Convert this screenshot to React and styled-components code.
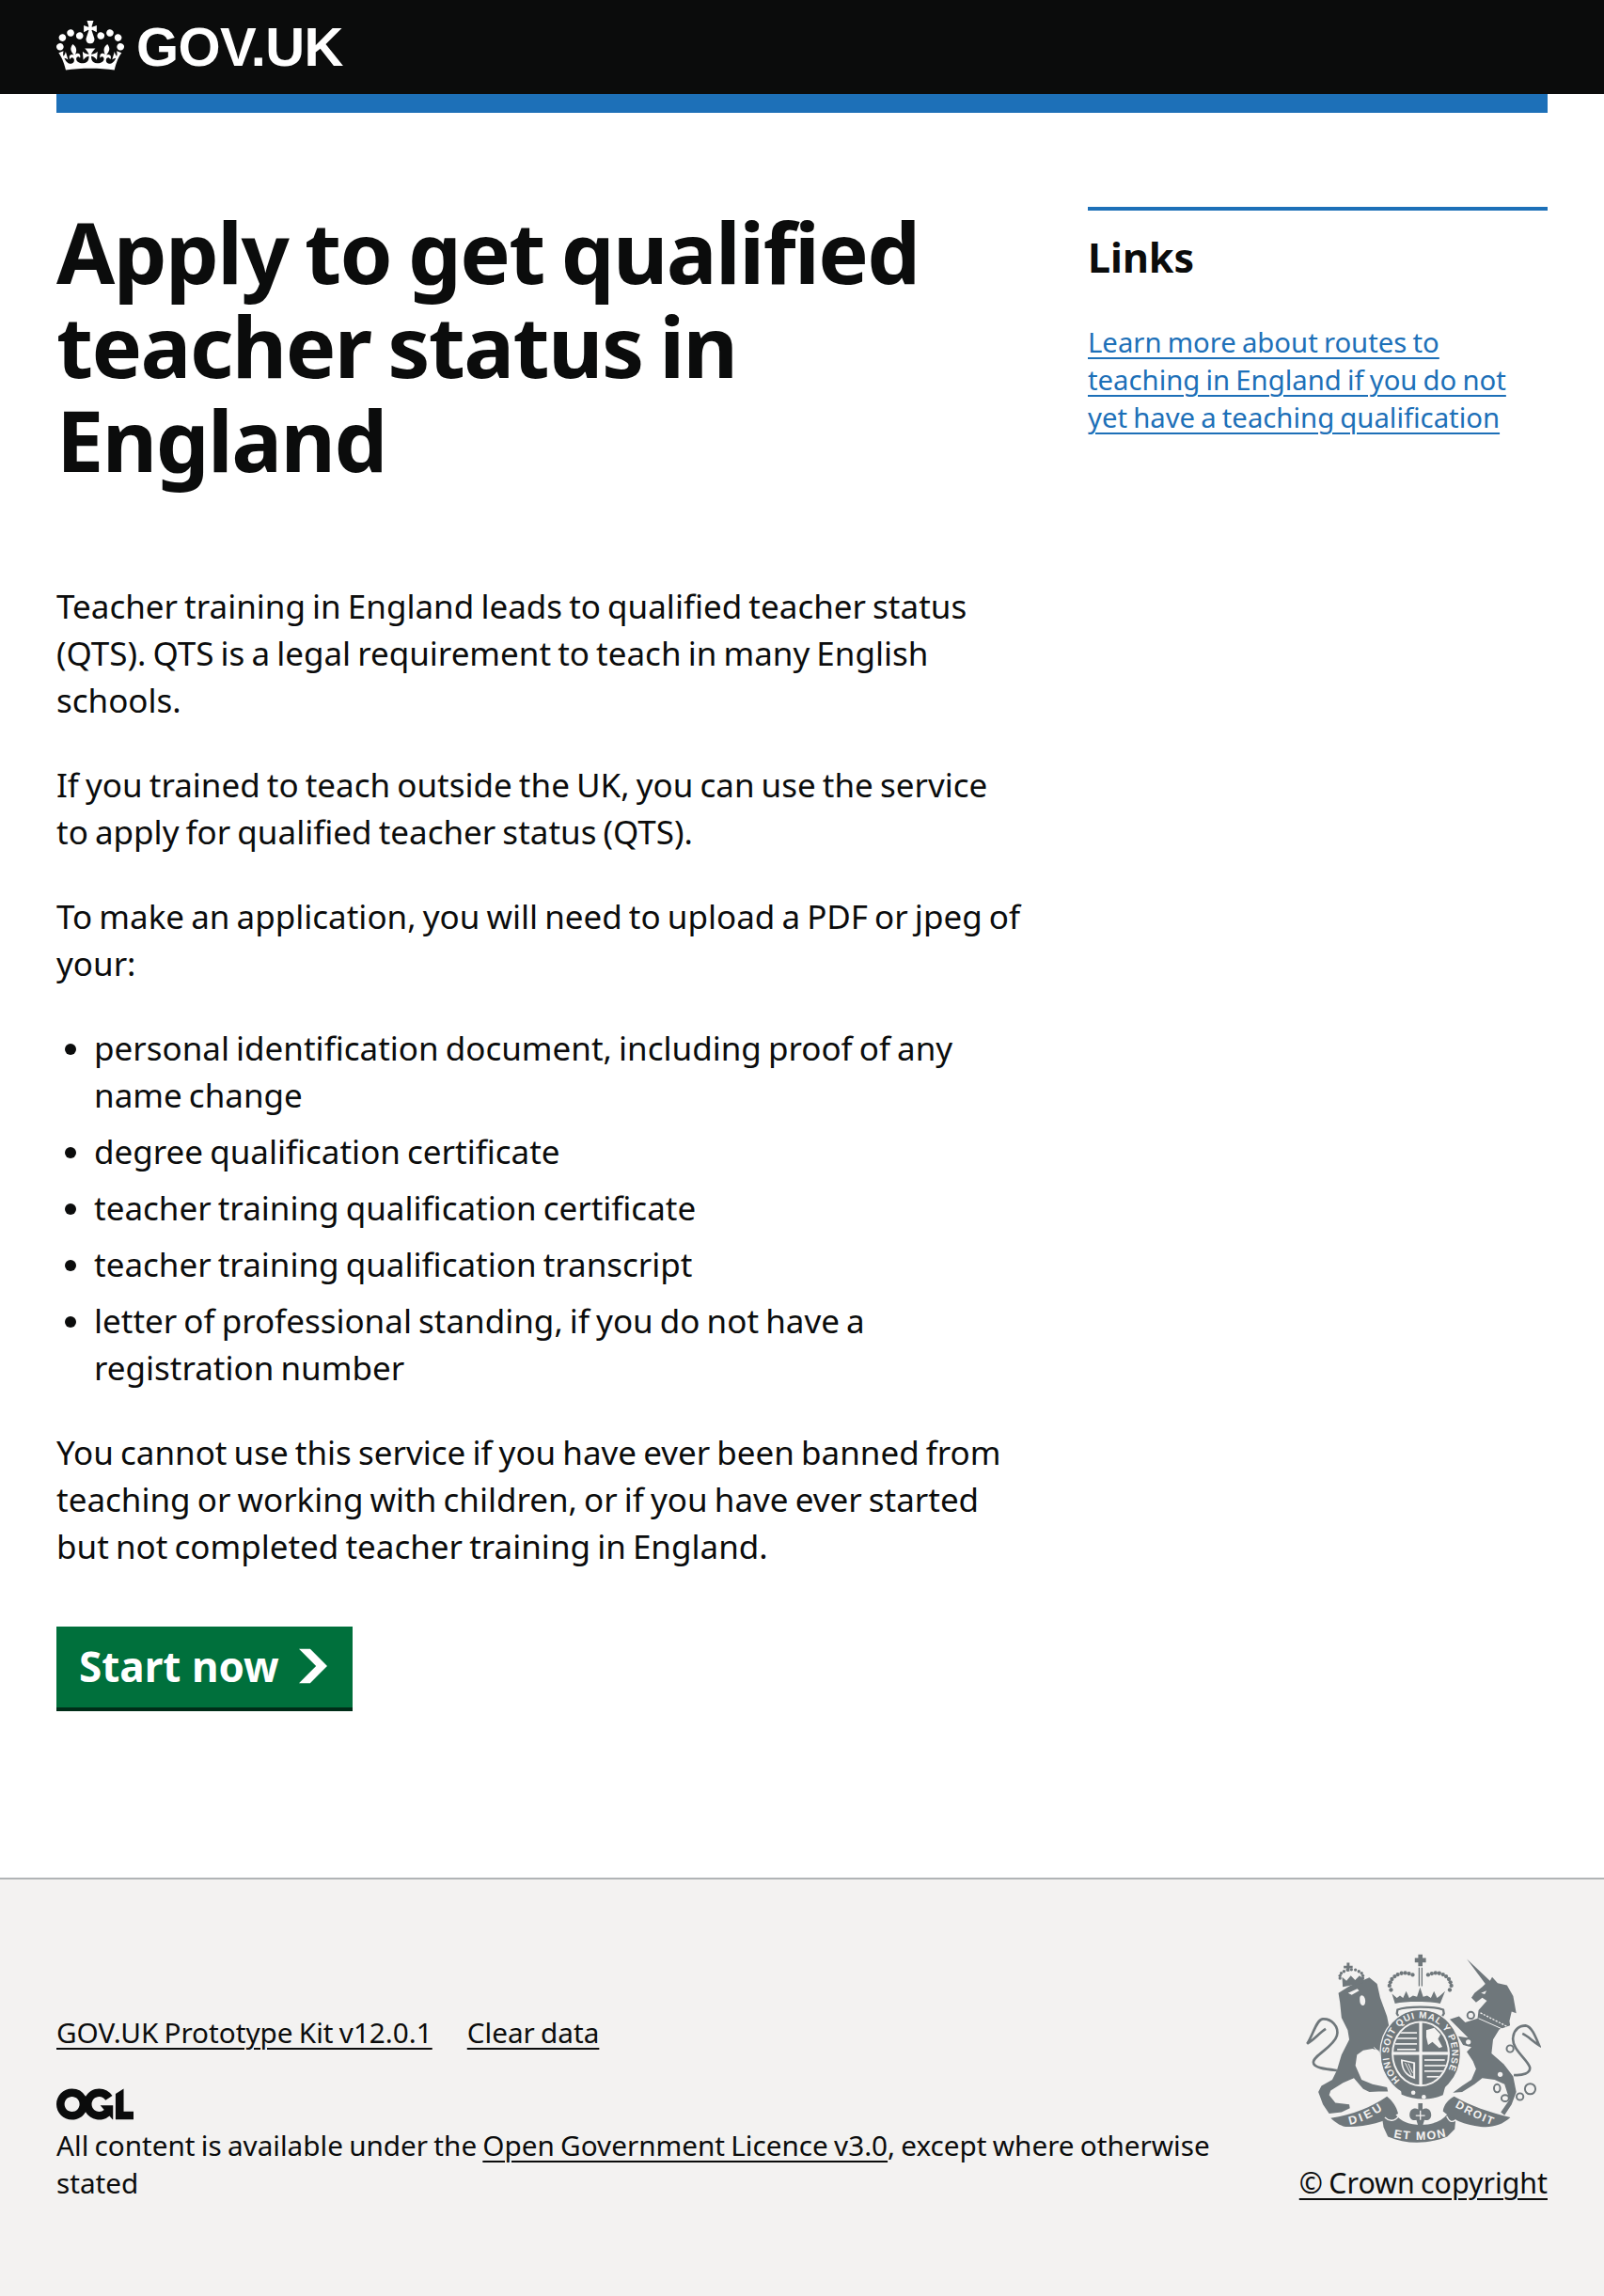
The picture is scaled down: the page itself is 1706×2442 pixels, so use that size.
import React from 'react';

import styled, { createGlobalStyle } from 'styled-components';

const BLACK = '#0b0c0c';
const BLUE = '#1d70b8';
const CREST = '#6f777b';
const FOOTER_BG = '#f3f2f1';
const FONT = '"Noto Sans", "Open Sans", sans-serif';

const GlobalStyle = createGlobalStyle`
  html, body {
    margin: 0;
    padding: 0;
    background: #fff;
    color: ${BLACK};
    font-family: ${FONT};
  }
  * { box-sizing: border-box; }
`;

const CROWN_PATH =
  'M25 30.2c3.5 1.5 7.7-.2 9.1-3.7 1.5-3.6-.2-7.8-3.9-9.2-3.6-1.4-7.6.3-9.1 3.9-1.4 3.5.3 7.5 3.9 9zM9 39.5c3.6 1.5 7.8-.2 9.2-3.7 1.5-3.6-.2-7.8-3.9-9.1-3.6-1.5-7.6.2-9.1 3.8-1.4 3.5.3 7.5 3.8 9zM4.4 57.2c3.5 1.5 7.7-.2 9.1-3.8 1.5-3.6-.2-7.7-3.9-9.1-3.5-1.5-7.6.3-9.1 3.8-1.4 3.5.3 7.6 3.9 9.1zm38.3-21.4c3.5 1.5 7.7-.2 9.1-3.8 1.5-3.6-.2-7.7-3.9-9.1-3.6-1.5-7.6.3-9.1 3.8-1.3 3.6.4 7.7 3.9 9.1zm64.4-5.6c-3.6 1.5-7.8-.2-9.1-3.7-1.5-3.6.2-7.8 3.8-9.2 3.6-1.4 7.7.3 9.2 3.9 1.3 3.5-.4 7.5-3.9 9zm15.9 9.3c-3.6 1.5-7.7-.2-9.1-3.7-1.5-3.6.2-7.8 3.7-9.1 3.6-1.5 7.7.2 9.2 3.8 1.5 3.5-.3 7.5-3.8 9zm4.7 17.7c-3.6 1.5-7.8-.2-9.2-3.8-1.5-3.6.2-7.7 3.9-9.1 3.6-1.5 7.7.3 9.2 3.8 1.3 3.5-.4 7.6-3.9 9.1zM89.3 35.8c-3.6 1.5-7.8-.2-9.2-3.8-1.4-3.6.2-7.7 3.9-9.1 3.6-1.5 7.7.3 9.2 3.8 1.4 3.6-.3 7.7-3.9 9.1zM69.7 17.7l8.9 4.7V9.3l-8.9 2.8c-.2-.3-.5-.6-.9-.9L72.4 0H59.6l3.5 11.2c-.3.3-.6.5-.9.9l-8.8-2.8v13.1l8.8-4.7c.3.3.6.7.9.9l-5 15.4v.1c-.2.8-.4 1.6-.4 2.4 0 4.1 3.1 7.5 7 8.1h.2c.3 0 .7.1 1 .1.4 0 .7 0 1-.1h.2c4-.6 7.1-4.1 7.1-8.1 0-.8-.1-1.7-.4-2.4V34l-5.1-15.4c.4-.2.7-.6 1-.9zM66 92.8c16.9 0 32.8 1.1 47.1 3.2 4-16.9 8.9-26.7 14-33.5l-9.6-3.4c1 4.9 1.1 7.2 0 10.2-1.5-1.4-3-4.3-4.2-8.7L108.6 76c2.8-2 5-3.2 7.5-3.3-4.4 9.4-10 11.9-13.6 11.2-4.3-.8-6.3-4.6-5.6-7.9 1-4.7 5.7-5.9 8-.5 4.3-8.7-3-11.4-7.6-8.8 7.1-7.2 7.9-13.5 2.1-21.1-8 6.1-8.1 12.3-4.5 20.8-4.7-5.4-12.1-2.5-9.5 6.2 3.4-5.2 7.9-2 7.2 3.1-.6 4.3-6.4 7.8-13.5 7.2-10.3-.9-10.9-8-11.2-13.8 2.5-.5 7.1 1.8 11 7.3L80.2 60c-4.1 4.4-8 5.3-12.3 5.4 1.4-4.4 8-11.6 8-11.6H55.5s6.4 7.2 7.9 11.6c-4.2-.1-8-1-12.3-5.4l1.4 16.4c3.9-5.5 8.5-7.7 10.9-7.3-.3 5.8-.9 12.8-11.1 13.8-7.2.6-12.9-2.9-13.5-7.2-.7-5 3.8-8.3 7.1-3.1 2.7-8.7-4.6-11.6-9.4-6.2 3.7-8.5 3.6-14.7-4.6-20.8-5.8 7.6-5 13.9 2.2 21.1-4.7-2.6-11.9.1-7.7 8.8 2.3-5.5 7.1-4.2 8.1.5.7 3.3-1.3 7.1-5.7 7.9-3.5.7-9-1.8-13.5-11.2 2.5.1 4.7 1.3 7.5 3.3l-4.7-15.4c-1.2 4.4-2.7 7.2-4.3 8.7-1.1-3-.9-5.3 0-10.2l-9.5 3.4c5 6.9 9.9 16.7 14 33.5 14.8-2.1 30.8-3.2 47.7-3.2z';

const OGL_PATH =
  'M421.5 142.8V.1l-50.7 32.3v161.1h112.4v-50.7zm-122.3-9.6A47.12 47.12 0 0 1 221 97.8c0-26 21.1-47.1 47.1-47.1 16.7 0 31.4 8.7 39.7 21.8l42.7-27.2A97.63 97.63 0 0 0 268.1 0c-36.5 0-68.3 20.1-85.1 49.7A98 98 0 0 0 97.8 0C43.9 0 0 43.9 0 97.8s43.9 97.8 97.8 97.8c36.5 0 68.3-20.1 85.1-49.7a97.76 97.76 0 0 0 149.6 25.4l19.4 22.2h3v-87.8h-80l24.3 27.5zM97.8 145c-26 0-47.1-21.1-47.1-47.1s21.1-47.1 47.1-47.1 47.2 21 47.2 47S123.8 145 97.8 145';

const LION_BODY =
  'M115 150l35-22 65-28 25 20 10 45 22 60 8 40-8 35 13 75-10 10-20-20-10-30-20-5-30 5-20 15-5 35 20 45 35 15 47 10 3 13-30 0-30 2-20-10-30-35-35 15-40 25-5 15 20 25 45 5 2 12-27 13-40 5-20-30-15-40 10-20 35-20 15-30 15-50 25-50-5-30-20-40-5-50z';

const UNICORN_BODY =
  'M140 40l75 70 7-12 18 20 30 7 20 35 10 55-15-5-7 30 2 15-35 13-20 32-5 45 40 35 30 40 10 50-15 40-23 35-12-10 28-40-16-50-32-15-40-5-25 20-40 25-30 2 30-22 30-20 15-35-10-25-20-30 15-15-27-7-16-28 33 5-60-60 30-10 20 20 40-13 3-27 27-30-15-10-20 15-15-15 10-15 25-20 10-10z';

const arc = (cx, cy, rx, ry, from, to, n) =>
  Array.from({ length: n }, (_, i) => {
    const a = ((from + ((to - from) * i) / (n - 1)) * Math.PI) / 180;
    return [Math.round(cx + rx * Math.cos(a)), Math.round(cy + ry * Math.sin(a))];
  });

const PEARLS = [
  ...arc(405, 190, 50, 45, 185, 300, 9),
  ...arc(505, 190, 50, 45, 240, 355, 9),
  [360, 200], [550, 200],
];

const LION_CROWN_DOTS = arc(232, 158, 38, 24, 170, 370, 11);

const LIONS = [
  [378, 336, 66], [372, 354, 72], [374, 372, 70], [380, 390, 60],
  [468, 424, 66], [468, 442, 70], [468, 460, 64], [476, 478, 46],
];

const Crest = () => (
  <CrestSvg viewBox="85 80 760 620">
    <defs>
      <clipPath id="shieldClip">
        <ellipse cx="456" cy="406" rx="88" ry="100" />
      </clipPath>
    </defs>
    <g fill={CREST}>
      {/* royal crown */}
      <path d="M448 85h14v12h11v14h-11v12h-14v-12h-11V97h11z" />
      <path d="M449 128h4v60h-4zM458 128h4v60h-4z" />
      {PEARLS.map(([cx, cy]) => (
        <circle key={`${cx}-${cy}`} cx={cx} cy={cy} r="6.5" />
      ))}
      <path d="M363 212l16 14 10-8 10 8 10-22 10 22 12-8 13 4 10-30 10 30 13-4 12 8 10-22 10 22 10-8 16-14-16 40c-40-8-110-8-146 0z" />
      <path d="M381 264c30-12 118-12 148 0l2 12c-2 4-4 8-8 12-30-10-106-10-136 0-4-4-6-8-8-12z" fill="none" stroke={CREST} strokeWidth="7" />

      {/* lion */}
      <g transform="translate(75 60)">
        <path d={LION_BODY} />
        <path d="M110 400c-36-4-76-8-76-26 0-22 66-50 76-86 8-30-18-56-46-54-20 2-30 48-50 80 24-14 38-34 60-48" fill="none" stroke={CREST} strokeWidth="8" />
        <path d="M146 150l30-14 6 6-24 14zM188 158c8-2 14 8 14 18s-4 16-10 14-8-10-8-18 0-12 4-14z" fill={FOOTER_BG} />
        <path d="M230 325l52 55" fill="none" stroke={FOOTER_BG} strokeWidth="3" />
      </g>

      {/* lion crown */}
      <path d="M217 112h9v10h10v8h-10v10h-9v-10h-10v-8h10z" />
      {LION_CROWN_DOTS.map(([cx, cy]) => (
        <circle key={`${cx}-${cy}`} cx={cx} cy={cy} r="5" />
      ))}
      <path d="M202 158l14 12 14-16 14 14 14-14 14 10-2 14-66 12z" />

      {/* unicorn */}
      <g transform="translate(465 60)">
        <path d={UNICORN_BODY} />
        <path d="M292 415c30 2 54-6 52-24-4-24-62-60-54-100 4-26 22-36 40-36 18 2 30 30 44 64-20-12-36-30-54-38" fill="none" stroke={CREST} strokeWidth="8" />
        <path d="M186 150l18-8-6 12z" fill={FOOTER_BG} />
        <path d="M180 200c-6 10-14 14-22 14l12-8z" fill={FOOTER_BG} />
        <path d="M184 214l90 46" fill="none" stroke={FOOTER_BG} strokeWidth="4" strokeDasharray="7 4" />
        <path d="M178 232l90 40" fill="none" stroke={FOOTER_BG} strokeWidth="3" />
        <circle cx="270" cy="378" r="8" fill={FOOTER_BG} />
        <circle cx="248" cy="413" r="8" fill={FOOTER_BG} />
        <circle cx="280" cy="330" r="11" fill={FOOTER_BG} />
        <circle cx="153" cy="222" r="11" fill={FOOTER_BG} />
        <circle cx="145" cy="308" r="11" fill={FOOTER_BG} />
        <g fill="none" stroke={CREST} strokeWidth="6">
          <circle cx="280" cy="330" r="11" />
          <circle cx="153" cy="222" r="11" />
          <circle cx="145" cy="308" r="11" />
          <ellipse cx="238" cy="458" rx="10" ry="13" />
          <ellipse cx="264" cy="490" rx="12" ry="10" />
          <circle cx="312" cy="485" r="11" />
          <circle cx="345" cy="460" r="17" />
        </g>
      </g>

      {/* garter and shield */}
      <ellipse cx="455" cy="405" rx="130" ry="142" stroke={FOOTER_BG} strokeWidth="4" />
      <ellipse cx="456" cy="406" rx="94" ry="106" fill={FOOTER_BG} />
      <path id="garter" d="M389 492A102 114 0 1 1 521 492" fill="none" />
      <text fontFamily='"Liberation Sans", sans-serif' fontSize="30" fontWeight="700" fill={FOOTER_BG}>
        <textPath href="#garter" textLength="490" lengthAdjust="spacing">HONI SOIT QUI MAL Y PENSE</textPath>
      </text>
      <g clipPath="url(#shieldClip)">
        <rect x="360" y="300" width="91" height="100" />
        <rect x="461" y="300" width="91" height="100" />
        <rect x="360" y="410" width="91" height="100" />
        <rect x="461" y="410" width="91" height="100" />
        {LIONS.map(([x, y, w]) => (
          <rect key={`${x}-${y}`} x={x} y={y} width={w} height="5" fill={FOOTER_BG} />
        ))}
        <path d="M474 330l26-8 20 22-8 14 14 26-10 4-22-20-14 10-6-26z" fill={FOOTER_BG} />
      </g>
      <path d="M392 424l46 10v54c-30-8-46-30-46-64z" fill={FOOTER_BG} />
      <path d="M398 430l34 8v42c-22-8-34-24-34-50z" />
      <path d="M406 436l20 40M416 438l14 30" stroke={FOOTER_BG} strokeWidth="3" fill="none" />

      {/* collar under the shield */}
      <path d="M390 502c40 34 100 34 146 8l-8 30c-40 18-94 16-134-2z" />
      <circle cx="432" cy="532" r="7" fill={FOOTER_BG} />
      <circle cx="466" cy="546" r="7" fill={FOOTER_BG} />

      {/* fleur */}
      <path d="M448 566h14v20c12-8 28 0 28 18 0 12-10 20-22 16l-6 20h-14l-6-20c-12 4-22-4-22-16 0-18 16-26 28-18z" />
      <path d="M455 590v30M440 606h30" stroke={FOOTER_BG} strokeWidth="4" fill="none" />

      {/* motto ribbons */}
      <path d="M165 614c72-12 130-34 182-70 16 12 32 34 36 56-46 28-104 44-170 42-20-4-32-14-48-28z" />
      <path d="M330 606l44-4c18 24 46 34 82 34s66-10 86-34l28 6-4 42-24 24c-66 26-132 26-192 0l-14-30z" />
      <path d="M528 592c2-20 18-40 36-48 52 30 116 52 182 68-28 26-62 34-96 30-52-6-94-24-122-50z" />
      <path d="M340 612c14 14 32 14 46-6M570 620c-14 10-22 6-30-12" fill="none" stroke={FOOTER_BG} strokeWidth="4" />
      <path id="ribbonLeft" d="M226 636c38-8 72-24 106-48" fill="none" />
      <text fontFamily='"Liberation Sans", sans-serif' fontSize="38" fontWeight="700" fill={FOOTER_BG}>
        <textPath href="#ribbonLeft" textLength="118" lengthAdjust="spacing">DIEU</textPath>
      </text>
      <path id="ribbonMid" d="M368 676c56 12 120 12 176-4" fill="none" />
      <text fontFamily='"Liberation Sans", sans-serif' fontSize="38" fontWeight="700" fill={FOOTER_BG}>
        <textPath href="#ribbonMid" textLength="172" lengthAdjust="spacing">ET MON</textPath>
      </text>
      <path id="ribbonRight" d="M566 578c38 22 76 42 120 58" fill="none" />
      <text fontFamily='"Liberation Sans", sans-serif' fontSize="36" fontWeight="700" fill={FOOTER_BG}>
        <textPath href="#ribbonRight" textLength="134" lengthAdjust="spacing">DROIT</textPath>
      </text>
    </g>
  </CrestSvg>
);

const App = () => (
  <>
    <GlobalStyle />
    <Header>
      <HeaderLogo href="#">
        <CrownSvg viewBox="0 0 132 97">
          <path fill="currentColor" fillRule="evenodd" d={CROWN_PATH} />
        </CrownSvg>
        <Logotype>GOV.UK</Logotype>
      </HeaderLogo>
    </Header>
    <Container>
      <BlueBar />
      <Main>
        <TwoThirds>
          <Title>Apply to get qualified teacher status in England</Title>
          <Body>
            Teacher training in England leads to qualified teacher status (QTS). QTS is a legal
            requirement to teach in many English schools.
          </Body>
          <Body>
            If you trained to teach outside the UK, you can use the service to apply for qualified
            teacher status (QTS).
          </Body>
          <Body>To make an application, you will need to upload a PDF or jpeg of your:</Body>
          <BulletList>
            <li>personal identification document, including proof of any name change</li>
            <li>degree qualification certificate</li>
            <li>teacher training qualification certificate</li>
            <li>teacher training qualification transcript</li>
            <li>letter of professional standing, if you do not have a registration number</li>
          </BulletList>
          <Body>
            You cannot use this service if you have ever been banned from teaching or working with
            children, or if you have ever started but not completed teacher training in England.
          </Body>
          <StartButton href="#">
            Start now
            <svg viewBox="0 0 33 40" width="30" height="38">
              <path fill="currentColor" d="M0 0h13.1l19.9 19.9L13 40H0l20-20.1z" />
            </svg>
          </StartButton>
        </TwoThirds>
        <Aside>
          <AsideTitle>Links</AsideTitle>
          <AsideLink href="#">
            Learn more about routes to teaching in England if you do not yet have a teaching
            qualification
          </AsideLink>
        </Aside>
      </Main>
    </Container>
    <Footer>
      <FooterInner>
        <FooterMeta>
          <MetaLinks>
            <FooterLink href="#">GOV.UK Prototype Kit v12.0.1</FooterLink>
            <FooterLink href="#">Clear data</FooterLink>
          </MetaLinks>
          <OglSvg viewBox="0 0 483.2 195.7">
            <path fill="currentColor" d={OGL_PATH} />
          </OglSvg>
          <Licence>
            All content is available under the{' '}
            <FooterLink href="#">Open Government Licence v3.0</FooterLink>, except where otherwise
            stated
          </Licence>
        </FooterMeta>
        <CopyrightBlock>
          <Crest />
          <CopyrightLink href="#">© Crown copyright</CopyrightLink>
        </CopyrightBlock>
      </FooterInner>
    </Footer>
  </>
);
export default App;

const Header = styled.header`
  height: 100px;
  padding: 0 60px;
  background: ${BLACK};
  display: flex;
  align-items: center;
`;

const HeaderLogo = styled.a`
  display: flex;
  align-items: center;
  gap: 13px;
  color: #fff;
  text-decoration: none;
`;

const CrownSvg = styled.svg`
  width: 72px;
  height: 53px;
  margin-top: -3px;
`;

const Logotype = styled.span`
  font-family: 'Liberation Sans', Arial, sans-serif;
  font-weight: 700;
  font-size: 58px;
  line-height: 60px;
  letter-spacing: -0.6px;
`;

const Container = styled.div`
  margin: 0 60px;
`;

const BlueBar = styled.div`
  height: 20px;
  background: ${BLUE};
`;

const Main = styled.main`
  display: grid;
  grid-template-columns: 1037px 489px;
  column-gap: 60px;
  padding-top: 100px;
  height: 1877px;
`;

const TwoThirds = styled.div`
  min-width: 0;
`;

const Title = styled.h1`
  margin: -3px 0 103px;
  font-weight: 700;
  font-size: 90px;
  line-height: 100px;
  letter-spacing: -1.6px;
  word-spacing: -4px;
`;

const Body = styled.p`
  margin: 0 0 40px;
  max-width: 1025px;
  font-size: 35px;
  line-height: 50px;
  word-spacing: -2px;
`;

const BulletList = styled.ul`
  margin: 0 0 40px;
  padding-left: 40px;
  font-size: 35px;
  line-height: 50px;
  word-spacing: -2px;

  li {
    margin-bottom: 10px;
  }
  li:last-child {
    margin-bottom: 0;
  }
`;

const StartButton = styled.a`
  display: inline-flex;
  align-items: center;
  gap: 21px;
  height: 90px;
  margin-top: 20px;
  padding: 0 27px 2px 24px;
  background: #00703c;
  color: #fff;
  font-weight: 700;
  font-size: 44px;
  text-decoration: none;
  border-bottom: 4px solid #002d18;
`;

const Aside = styled.aside`
  align-self: start;
  padding-top: 20px;
  border-top: 4px solid ${BLUE};
`;

const AsideTitle = styled.h2`
  margin: 0 0 40px;
  font-weight: 700;
  font-size: 43px;
  line-height: 60px;
`;

const AsideLink = styled.a`
  display: block;
  color: ${BLUE};
  font-size: 29.3px;
  line-height: 40px;
  word-spacing: -1.5px;
  text-decoration-thickness: 2px;
  text-underline-offset: 5px;
`;

const Footer = styled.footer`
  border-top: 2px solid #b1b4b6;
  background: ${FOOTER_BG};
  padding: 78px 60px 102px;
`;

const FooterInner = styled.div`
  display: flex;
  align-items: flex-end;
  justify-content: space-between;
  gap: 60px;
`;

const FooterMeta = styled.div`
  flex: 1;
  min-width: 0;
`;

const MetaLinks = styled.div`
  display: flex;
  gap: 37px;
  margin-bottom: 39px;
`;

const FooterLink = styled.a`
  color: ${BLACK};
  font-size: 29.7px;
  line-height: 40px;
  word-spacing: -1.5px;
  text-decoration-thickness: 2px;
  text-underline-offset: 5px;
`;

const CopyrightLink = styled(FooterLink)`
  font-size: 30.3px;
`;

const OglSvg = styled.svg`
  display: block;
  width: 82px;
  height: 34px;
  color: ${BLACK};
`;

const Licence = styled.p`
  margin: 7px 0 0;
  font-size: 29.7px;
  line-height: 40px;
  word-spacing: -1.5px;
  color: ${BLACK};
`;

const CopyrightBlock = styled.div`
  display: flex;
  flex-direction: column;
  align-items: center;
  gap: 21px;
  white-space: nowrap;
`;

const CrestSvg = styled.svg`
  display: block;
  width: 250px;
  height: 204px;
`;
